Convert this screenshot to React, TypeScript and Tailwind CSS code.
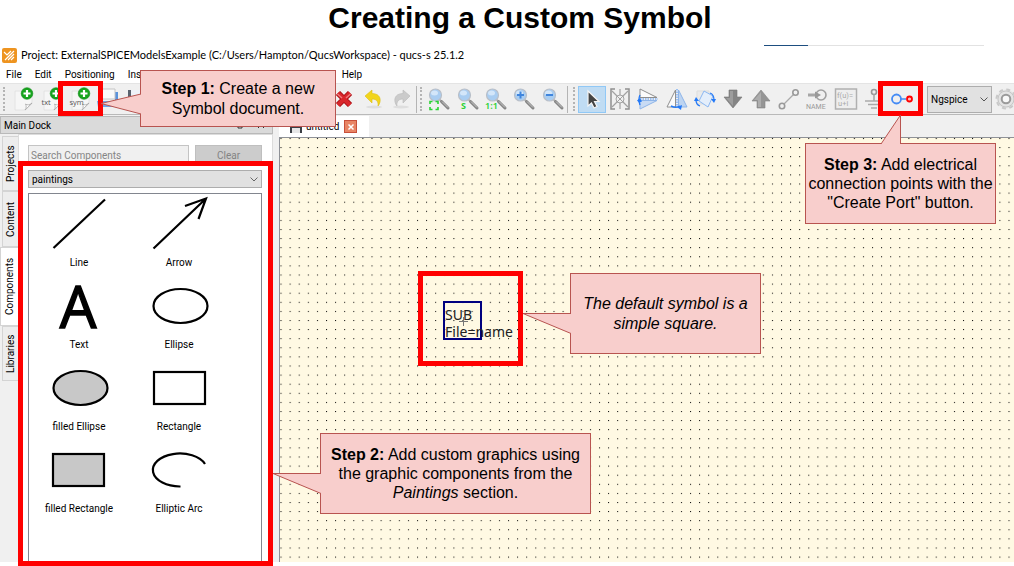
import React from "react";

const ui = "font-['Roboto','Open_Sans',sans-serif]";

function Svg({ children, size = "size-6" }: { children: React.ReactNode; size?: string }) {
  return (
    <svg viewBox="0 0 24 24" className={`${size} shrink-0`} fill="none" aria-hidden="true">
      {children}
    </svg>
  );
}

function Tool({ label, active, children }: { label: string; active?: boolean; children: React.ReactNode }) {
  return (
    <button
      type="button"
      aria-label={label}
      className={`flex h-[27px] min-w-0 flex-1 items-center justify-center border ${
        active ? "border-[#90c8f6] bg-[#c0dcf3]" : "border-transparent"
      }`}
    >
      {children}
    </button>
  );
}

function Handle() {
  return <span className="mr-0.5 ml-[3px] h-6 w-[3px] shrink-0 border-l-2 border-dotted border-[#b4b4b4]" />;
}

function NewDoc({ text }: { text?: string }) {
  return (
    <Svg>
      <path d="M3 4h17v13l-6 6H3z" fill="#f6f6f6" stroke="#e0e0e0" strokeWidth="0.8" />
      <path d="M13 23c1.500-2 1.500-4 .5-6 2 1.500 4 1 6.500-1z" fill="#fff" stroke="#a8a8a8" strokeWidth="0.8" />
      {text && (
        <text x="0.500" y="18" fontSize="7.500" fill="#555" fontFamily="Open Sans">
          {text}
        </text>
      )}
      <circle cx="15" cy="6.500" r="5.800" fill="#17a51e" stroke="#0a8412" strokeWidth="0.6" />
      <path d="M15 3v7M11.500 6.500h7" stroke="#fff" strokeWidth="2.200" />
    </Svg>
  );
}

function Lens({ children }: { children?: React.ReactNode }) {
  return (
    <Svg>
      <path d="M12 12l4 4" stroke="#b5b5b5" strokeWidth="2" />
      <path d="M14.500 14.500l6.500 6.500" stroke="#858585" strokeWidth="3" strokeLinecap="round" />
      <path d="M15 14.500l6 6" stroke="#c9c9c9" strokeWidth="1" />
      <circle cx="8.500" cy="8" r="6" fill="#a9cdf1" stroke="#b9bfc8" strokeWidth="1.200" />
      <ellipse cx="7.500" cy="6" rx="3.500" ry="2.500" fill="#d3e6f9" />
      {children}
    </Svg>
  );
}

function Toolbar() {
  return (
    <div className="flex h-[32px] items-center overflow-hidden border-t border-b border-t-[#e4e4e4] border-b-[#b9b9b9] bg-[#f0f0f0]">
      <div className="flex w-[417px] shrink-0 items-center border-r border-[#b4b4b4]">
        <Handle />
        <div className="ml-0.5 flex w-[142px] items-center">
          <Tool label="New"><NewDoc /></Tool>
          <Tool label="New text document"><NewDoc text="txt" /></Tool>
          <Tool label="New symbol"><NewDoc text="sym" /></Tool>
          <Tool label="Open">
            <Svg>
              <path d="M4 8V5h17v13h-3V9" fill="#5a93dc" />
              <path d="M2 2h16v10H2z" fill="#fafafa" stroke="#c4c4c4" />
              <path d="M0 14h20v6H1z" fill="#6ea6ea" />
            </Svg>
          </Tool>
          <Tool label="Save">
            <Svg>
              <path d="M2 3h20v18H2z" fill="#5a626e" />
              <path d="M5 3h14v9H5z" fill="#eef2f8" />
            </Svg>
          </Tool>
        </div>
        <div className="ml-auto flex w-[86px] items-center">
          <Tool label="Delete">
            <Svg>
              <path d="M6 6l12 12M18 6L6 18" stroke="#a90f14" strokeWidth="6" />
              <path d="M6 6l12 12M18 6L6 18" stroke="#d9262b" strokeWidth="4" />
              <path d="M5.500 7l4.500 4M18.500 7L14 11" stroke="#ee7a7d" strokeWidth="1.500" />
            </Svg>
          </Tool>
          <Tool label="Undo">
            <Svg>
              <ellipse cx="13" cy="20" rx="8" ry="1.500" fill="#dedede" />
              <path d="M4 9l7-6v3.500c6 0 9 3.500 8 8.500-.3 1.500-1 3-2 4 .5-4-1-7-6-7V16z" fill="#f2d51c" stroke="#dcbd12" strokeWidth="0.600" />
            </Svg>
          </Tool>
          <Tool label="Redo">
            <Svg>
              <ellipse cx="11" cy="20" rx="8" ry="1.500" fill="#dedede" />
              <path d="M20 9l-7-6v3.500c-6 0-9 3.500-8 8.500.3 1.500 1 3 2 4-.5-4 1-7 6-7V16z" fill="#cbcbcb" stroke="#b8b8b8" strokeWidth="0.600" />
            </Svg>
          </Tool>
        </div>
      </div>

      <div className="flex w-[151px] shrink-0 items-center border-r border-[#b4b4b4]">
        <Handle />
        <Tool label="Zoom to fit">
          <Lens>
            <path d="M3 17v-2.500h2.500M8.500 14.500H11V17M11 20v2.500H8.500M5.500 22.500H3V20" stroke="#2bd234" strokeWidth="1.600" />
          </Lens>
        </Tool>
        <Tool label="Zoom to selection">
          <Lens>
            <text x="5" y="22" fontSize="9" fontWeight="700" fill="#2bd234" fontFamily="Noto Sans">S</text>
          </Lens>
        </Tool>
        <Tool label="View 1:1">
          <Lens>
            <text x="1" y="22" fontSize="9" fontWeight="600" fill="#2bd234" fontFamily="Noto Sans">1:1</text>
          </Lens>
        </Tool>
        <Tool label="Zoom in">
          <Lens>
            <path d="M8.500 4.500v7M5 8h7" stroke="#3f85dd" strokeWidth="2" />
          </Lens>
        </Tool>
        <Tool label="Zoom out">
          <Lens>
            <path d="M5 8h7" stroke="#3f85dd" strokeWidth="2" />
          </Lens>
        </Tool>
      </div>

      <div className="flex w-[359px] shrink-0 items-center pr-[11px] pl-0.5">
        <Handle />
        <Tool label="Select" active>
          <Svg>
            <path d="M8 4v15l3.500-3 2.500 5 3-1.500-2.500-5H19z" fill="#444" stroke="#f4f4f4" strokeWidth="1.200" />
          </Svg>
        </Tool>
        <Tool label="Deactivate component">
          <Svg>
            <path d="M7 2H3v20h4M17 2h4v20h-4" stroke="#8f8f8f" strokeWidth="1.500" />
            <path d="M4 4l16 16M20 4L4 20M12 2v20" stroke="#a2a2a2" strokeWidth="1.200" />
            <circle cx="12" cy="12" r="4" fill="#efefef" stroke="#a2a2a2" />
            <path d="M8 8l8 8M16 8l-8 8" stroke="#a2a2a2" />
          </Svg>
        </Tool>
        <Tool label="Mirror about X axis">
          <Svg>
            <path d="M4 2v8.500h17z" fill="#fbfbfb" stroke="#8e8e8e" />
            <path d="M4 13.500h17L4 22z" fill="#c8dbf4" stroke="#8eb5e9" />
            <path d="M4 12h18" stroke="#4b92f5" strokeDasharray="1.500 1" />
            <path d="M4 8c-1.500 3-1.500 6 0 10" stroke="#2479f6" strokeWidth="1.300" />
            <path d="M1 13.500l3-2.500 2 3.500-3 1z" fill="#2479f6" />
          </Svg>
        </Tool>
        <Tool label="Mirror about Y axis">
          <Svg>
            <path d="M10.500 3v17H2z" fill="#fbfbfb" stroke="#909090" />
            <path d="M13.500 3v17H22z" fill="#bdd4f1" stroke="#8eb5e9" />
            <path d="M12 2v19" stroke="#4b92f5" strokeDasharray="1.500 1" />
            <path d="M6 19c4 2 6 2 9 0" stroke="#2479f6" strokeWidth="1.500" />
            <path d="M17 18l-1 5-4-3z" fill="#2479f6" />
          </Svg>
        </Tool>
        <Tool label="Rotate">
          <Svg>
            <path d="M4 4h12v13H4z" fill="#eaeaea" stroke="#ddd" />
            <path d="M11 4l9 5-5 11-9-6z" fill="#e4eefb" stroke="#8cb8f2" />
            <path d="M7 19c-3-1-4-3-4-6M17 6c3 1 4 4 4 7" stroke="#2479f6" strokeWidth="1.300" />
            <path d="M1 14l2-4 3 4zM18 12h5l-2 4z" fill="#2479f6" />
          </Svg>
        </Tool>
        <Tool label="Go into subcircuit">
          <Svg>
            <path d="M8 3h8v7h5L12 21 3 10h5z" fill="#858585" stroke="#777" strokeWidth="0.600" />
            <path d="M9 4h3v15L5 11h4z" fill="#9d9d9d" />
          </Svg>
        </Tool>
        <Tool label="Pop out">
          <Svg>
            <path d="M8 21h8v-7h5L12 3 3 14h5z" fill="#959595" stroke="#858585" strokeWidth="0.600" />
            <path d="M12 5v15H9v-7H5z" fill="#adadad" />
          </Svg>
        </Tool>
        <Tool label="Wire">
          <Svg>
            <path d="M7 17L17 7" stroke="#aaa" strokeWidth="1.300" />
            <circle cx="5" cy="19" r="2.700" stroke="#999" strokeWidth="1.600" />
            <circle cx="18.500" cy="5.500" r="2.700" stroke="#999" strokeWidth="1.600" />
          </Svg>
        </Tool>
        <Tool label="Wire label">
          <Svg>
            <path d="M3 8h8" stroke="#a6a6a6" strokeWidth="3" />
            <circle cx="16" cy="8" r="5" stroke="#a0a0a0" strokeWidth="1.600" />
            <path d="M10 4.500l6 3.500-6 3.500z" fill="#999" />
            <text x="1" y="21.500" fontSize="7" fill="#999" fontFamily="Roboto">NAME</text>
          </Svg>
        </Tool>
        <Tool label="Insert equation">
          <Svg>
            <rect x="1.500" y="2" width="21" height="20" fill="#eee" stroke="#b0b0b0" strokeWidth="1.500" />
            <text x="3" y="11" fontSize="7.500" fill="#aaa" fontFamily="Roboto">f(u)=</text>
            <text x="4" y="18.500" fontSize="7.500" fill="#aaa" fontFamily="Roboto">u+i</text>
          </Svg>
        </Tool>
        <Tool label="Insert ground">
          <Svg>
            <circle cx="12" cy="5" r="2.500" stroke="#999" strokeWidth="1.600" />
            <path d="M12 7.500V14M3 14h18M6 17.500h12M9 21h6" stroke="#aaa" strokeWidth="1.600" />
          </Svg>
        </Tool>
        <Tool label="Create port">
          <Svg>
            <path d="M10 12h6" stroke="#448bf5" strokeWidth="1.500" />
            <circle cx="6.500" cy="12" r="4.500" stroke="#448bf5" strokeWidth="1.800" />
            <circle cx="19.500" cy="12" r="2.500" fill="#fbb" stroke="#f00" strokeWidth="1.800" />
          </Svg>
        </Tool>
      </div>

      <div className="relative h-[27px] w-[65px] shrink-0">
        <select
          aria-label="Simulator"
          className={`block h-full w-full appearance-none border border-[#adadad] bg-[#e1e1e1] pl-[3px] text-[10px] text-black ${ui}`}
        >
          <option>Ngspice</option>
        </select>
        <svg viewBox="0 0 8 5" className="pointer-events-none absolute top-[11px] right-1 h-[5px] w-2" fill="none">
          <path d="M0.500 0.500L4 4l3.500-3.500" stroke="#555" />
        </svg>
      </div>
      <button type="button" aria-label="Simulator settings" className="ml-0.5 shrink-0">
        <Svg>
          <circle cx="12" cy="12" r="9.500" fill="#e6e6e6" stroke="#c9c9c9" strokeWidth="2" strokeDasharray="4 3.460" />
          <circle cx="12" cy="12" r="8" fill="#e4e4e4" stroke="#c6c6c6" />
          <circle cx="12" cy="12" r="4.300" fill="#f8f8f8" stroke="#9a9a9a" strokeWidth="2" />
        </Svg>
      </button>
    </div>
  );
}

const line = { stroke: "#000", strokeWidth: 2.2, fill: "none" };

const paintings: { name: string; art: React.ReactNode }[] = [
  { name: "Line", art: <path d="M4.500 54L56 5.500" {...line} /> },
  { name: "Arrow", art: <path d="M4.500 54.500L57 4.500M36 12L57 4.500L49.500 25" {...line} /> },
  {
    name: "Text",
    art: (
      <text x="29" y="52" fontSize="58" textAnchor="middle" fontFamily="Open Sans" stroke="#000" strokeWidth="1.500">
        A
      </text>
    ),
  },
  { name: "Ellipse", art: <ellipse cx="31.500" cy="30" rx="27" ry="17" {...line} /> },
  { name: "filled Ellipse", art: <ellipse cx="31.500" cy="30" rx="27" ry="17" {...line} fill="#c8c8c8" /> },
  { name: "Rectangle", art: <rect x="5" y="14" width="51" height="32" {...line} /> },
  { name: "filled Rectangle", art: <rect x="4" y="14" width="51" height="32" {...line} fill="#c8c8c8" /> },
  { name: "Elliptic Arc", art: <path d="M31.500 46.500A27 16.500 0 1 1 56 24" {...line} /> },
];

const tabs = [
  { name: "Projects", box: "h-[55px]" },
  { name: "Content", box: "h-[56px]" },
  { name: "Components", box: "h-[79px]" },
  { name: "Libraries", box: "h-[55px]" },
];

function Dock() {
  return (
    <aside className="flex w-[273px] shrink-0 flex-col">
      <div className="flex h-[18px] items-center border border-[#b9b9b9] bg-[#dadada] px-[3px] text-[10px]">
        <span>Main Dock</span>
        <button type="button" aria-label="Float dock" className="ml-auto p-1">
          <svg viewBox="0 0 8 8" className="size-2" aria-hidden="true">
            <path d="M1 3h4v4H1zM3 3V1h4v4H5" fill="none" stroke="#333" />
          </svg>
        </button>
        <button type="button" aria-label="Close dock" className="ml-1 p-1">
          <svg viewBox="0 0 8 8" className="size-2" aria-hidden="true">
            <path d="M1 1l6 6M7 1L1 7" stroke="#333" />
          </svg>
        </button>
      </div>
      <div className="flex flex-1">
        <div role="tablist" className="flex w-[18px] shrink-0 flex-col items-end pt-0.5">
          {tabs.map((t) => (
            <button
              key={t.name}
              type="button"
              role="tab"
              aria-selected={t.name === "Components"}
              className={`${t.box} flex rotate-180 items-center justify-center border border-l-0 border-[#d4d4d4] text-[10px] [writing-mode:vertical-rl] ${
                t.name === "Components" ? "w-[18px] bg-white" : "w-4 bg-[#ededed]"
              }`}
            >
              {t.name}
            </button>
          ))}
        </div>
        <div className="flex flex-1 flex-col border border-b-0 border-[#dcdcdc] bg-white pr-[10px] pl-[9px]">
          <div className="mt-[10px] flex gap-1.5">
            <input
              aria-label="Search Components"
              placeholder="Search Components"
              className="h-5 w-[161px] border border-[#c4c4c4] bg-[#f0f0f0] px-0.5 text-[10px] placeholder:text-[#858585]"
            />
            <button type="button" disabled className="h-5 flex-1 border border-[#bfbfbf] bg-[#cccccc] text-[10px] text-[#838383]">
              Clear
            </button>
          </div>
          <div className="relative mt-[5px] h-[18px]">
            <select
              aria-label="Component category"
              className="block h-full w-full appearance-none border border-[#adadad] bg-[#e1e1e1] pl-[3px] text-[10px] text-black"
            >
              <option>paintings</option>
            </select>
            <svg viewBox="0 0 8 5" className="pointer-events-none absolute top-[7px] right-1 h-[5px] w-2" fill="none">
              <path d="M0.500 0.500L4 4l3.500-3.500" stroke="#666" />
            </svg>
          </div>
          <ul className="mt-[5px] grid flex-1 grid-cols-[100px_100px] content-start gap-y-1 border border-b-0 border-[#82868f]">
            {paintings.map((p) => (
              <li key={p.name} className="flex h-[78px] flex-col items-center">
                <svg viewBox="0 0 60 60" className="size-[60px] overflow-visible" aria-hidden="true">{p.art}</svg>
                <span className="text-[10px] leading-[18px]">{p.name}</span>
              </li>
            ))}
          </ul>
        </div>
      </div>
    </aside>
  );
}

function Sheet() {
  return (
    <main className="ml-1.5 flex min-w-0 flex-1 flex-col">
      <div className="flex h-[21px] items-stretch">
        <div className="flex w-[90px] items-center bg-white pl-[11px]">
          <svg viewBox="0 0 12 12" className="size-3 shrink-0" aria-hidden="true">
            <path d="M0 0h12v12H0z" fill="#3c3f45" />
            <path d="M3 0h6v4H3zM2 7h8v5H2z" fill="#e6e6e6" />
          </svg>
          <span className="ml-1 text-[10px]">untitled</span>
          <button type="button" aria-label="Close untitled" className="mr-3 ml-auto flex size-[13px] shrink-0 items-center justify-center border border-[#c8503a] bg-[#e88565]">
            <svg viewBox="0 0 8 8" className="size-2 shrink-0" aria-hidden="true">
              <path d="M1.500 1.500l5 5M6.500 1.500l-5 5" stroke="#fff" strokeWidth="1.500" />
            </svg>
          </button>
        </div>
      </div>
      <div className="relative flex-1 border-t border-l border-[#8e9197] bg-[#fff9e3]">
        <svg className="absolute inset-0 h-full w-full" aria-hidden="true">
          <defs>
            <pattern id="grid" x="0.500" y="0" width="9.1" height="9.1" patternUnits="userSpaceOnUse">
              <rect width="1" height="1" fill="#000" />
            </pattern>
          </defs>
          <rect width="100%" height="100%" fill="url(#grid)" />
        </svg>
        <div className="absolute top-[163px] left-[163px] size-[39px] border-2 border-[#000080] font-['Noto_Sans',sans-serif] text-[14px] leading-[17px] whitespace-nowrap text-[#222]">
          <div className="pt-[3px]">SUB</div>
          <div>File=name</div>
          <svg viewBox="0 0 9 9" className="absolute top-[14px] left-[14px] size-[9px]" aria-hidden="true">
            <path d="M4.500 0v9M0 4.500h9" stroke="#777" />
          </svg>
        </div>
      </div>
    </main>
  );
}

function Callout({
  place,
  tail,
  points,
  edge,
  children,
}: {
  place: string;
  tail: string;
  points: string;
  edge: string;
  children: React.ReactNode;
}) {
  return (
    <div
      className={`absolute flex items-center justify-center border border-[#b85450] bg-[#f8cecc] text-center font-['Liberation_Sans',Arial,sans-serif] text-[16px] whitespace-nowrap text-black ${place}`}
    >
      <svg viewBox={edge} className={`absolute ${tail}`} aria-hidden="true">
        <polygon points={points} fill="#f8cecc" />
        <polyline points={points} fill="none" stroke="#b85450" />
      </svg>
      <p>{children}</p>
    </div>
  );
}

export default function App() {
  return (
    <div className={`relative flex min-h-screen flex-col overflow-hidden bg-white pb-1 text-black ${ui}`}>
      <h1 className="h-[45px] pl-[26px] text-center font-['Liberation_Sans',Arial,sans-serif] text-[30px] leading-[36px] font-bold">
        Creating a Custom Symbol
      </h1>
      <div className="absolute top-[45px] right-[30px] flex h-px w-[220px] bg-[#e2e2e2]">
        <span className="w-11 bg-[#1d4e80]" />
      </div>
      <div className="flex h-[21px] items-center gap-1 pl-0.5 font-['Lato',sans-serif] text-[11px]">
        <svg viewBox="0 0 15 15" className="size-[15px]" aria-hidden="true">
          <rect width="15" height="15" rx="2" fill="#ee9420" />
          <path d="M2 4l3 3 4-4M3 12l9-9M6 12l6-6M9 12l3-3" stroke="#fff" strokeWidth="1.200" fill="none" />
        </svg>
        <span>Project: ExternalSPICEModelsExample (C:/Users/Hampton/QucsWorkspace) - qucs-s 25.1.2</span>
      </div>
      <nav className="flex h-[17px] items-center gap-[13px] pl-1.5 text-[10px]">
        <button type="button">File</button>
        <button type="button">Edit</button>
        <button type="button">Positioning</button>
        <button type="button" className="w-[201px] text-left">Insert</button>
        <button type="button">Help</button>
      </nav>
      <Toolbar />
      <div className="flex flex-1 bg-[#f0f0f0] pt-px">
        <Dock />
        <Sheet />
      </div>

      <div className="pointer-events-none absolute top-[81px] left-[58px] h-[35px] w-[45px] border-[5px] border-[#ff0000]" />
      <div className="pointer-events-none absolute top-[81px] left-[878px] h-[35px] w-[45px] border-[5px] border-[#ff0000]" />
      <div className="pointer-events-none absolute top-[161px] bottom-0 left-[18px] w-[255px] border-[5px] border-[#ff0000]" />
      <div className="pointer-events-none absolute top-[271px] left-[418px] h-[95px] w-[105px] border-[5px] border-[#ff0000]" />

      <Callout
        place="top-[70px] left-[140px] h-[57px] w-[196px] leading-[20px]"
        tail="top-[22px] -left-10 h-[22px] w-10"
        edge="0 0 40 22"
        points="40,1 0,10.5 40,21"
      >
        <strong>Step 1:</strong> Create a new
        <br />
        Symbol document.
      </Callout>
      <Callout
        place="top-[433px] left-[320px] h-[81px] w-[271px] leading-[19px]"
        tail="top-[39px] -left-12 h-[22px] w-12"
        edge="0 0 48 22"
        points="48,0.5 0,0.5 48,20.5"
      >
        <strong>Step 2:</strong> Add custom graphics using
        <br />
        the graphic components from the
        <br />
        <em>Paintings</em> section.
      </Callout>
      <Callout
        place="top-[143px] left-[805px] h-[81px] w-[191px] leading-[19px]"
        tail="-top-[29px] left-[74px] h-[29px] w-[22px]"
        edge="0 0 22 29"
        points="1,29 20.5,0 20.5,29"
      >
        <strong>Step 3:</strong> Add electrical
        <br />
        connection points with the
        <br />
        "Create Port" button.
      </Callout>
      <Callout
        place="top-[273px] left-[570px] h-[81px] w-[191px] leading-[20px]"
        tail="top-[39px] -left-12 h-[22px] w-12"
        edge="0 0 48 22"
        points="48,0.5 0,0.5 48,20.5"
      >
        <em>
          The default symbol is a
          <br />
          simple square.
        </em>
      </Callout>
    </div>
  );
}
